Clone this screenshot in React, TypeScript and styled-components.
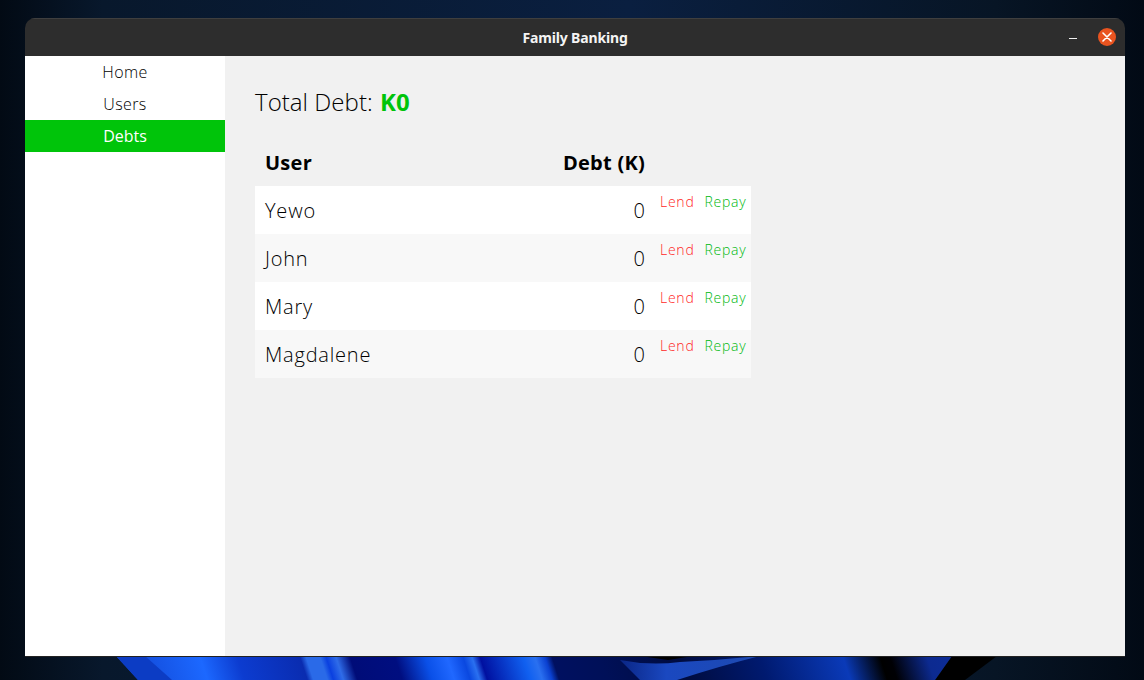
import styled, { createGlobalStyle } from "styled-components";

const GlobalStyle = createGlobalStyle`
  html, body {
    margin: 0;
    padding: 0;
    height: 100%;
    overflow: hidden;
    background: #020c1c;
  }
`;

const Desktop = styled.div`
  position: relative;
  width: 1144px;
  height: 680px;
  overflow: hidden;
  padding: 18px 19px 0 25px;
  box-sizing: border-box;
  background: linear-gradient(90deg, #020a14 0%, #08182c 9%, #0a1f40 55%, #071525 87%, #020a15 100%);
  font-family: "Open Sans", "Liberation Sans", sans-serif;
`;

const Wallpaper = styled.svg`
  position: absolute;
  left: 0;
  top: 0;
`;

const Window = styled.div`
  position: relative;
  width: 1100px;
  height: 639px;
  box-sizing: border-box;
  display: flex;
  flex-direction: column;
  border-radius: 10px 10px 0 0;
  border-bottom: 1px solid #222;
  overflow: hidden;
`;

const TitleBar = styled.div`
  position: relative;
  height: 38px;
  flex: none;
  display: flex;
  align-items: center;
  justify-content: center;
  background: #2d2d2d;
  box-shadow: inset 0 1px 0 #3f3f3f;
`;

const Title = styled.span`
  font-family: "Noto Sans", "Open Sans", sans-serif;
  font-size: 14px;
  font-weight: 700;
  letter-spacing: -0.15px;
  color: #f4f4f4;
`;

const WindowButtons = styled.div`
  position: absolute;
  right: 9px;
  top: 10px;
  display: flex;
  align-items: center;
  gap: 21px;
`;

const Minimize = styled.span`
  width: 8px;
  height: 1px;
  margin-top: 3px;
  background: #f0f0f0;
`;

const Close = styled.span`
  width: 18px;
  height: 18px;
  border-radius: 50%;
  background: #e95420;
  display: flex;
  align-items: center;
  justify-content: center;
`;

const Body = styled.div`
  flex: 1;
  display: flex;
  min-height: 0;
`;

const Sidebar = styled.nav`
  width: 200px;
  flex: none;
  background: #fff;
  display: flex;
  flex-direction: column;
`;

const NavItem = styled.div<{ $active?: boolean }>`
  height: 32px;
  line-height: 32px;
  text-align: center;
  font-size: 16px;
  font-weight: ${(p) => (p.$active ? 400 : 300)};
  letter-spacing: ${(p) => (p.$active ? "0" : "0.4px")};
  color: ${(p) => (p.$active ? "#fff" : "#000")};
  background: ${(p) => (p.$active ? "#00c40a" : "transparent")};
`;

const Main = styled.main`
  flex: 1;
  background: #f1f1f1;
  padding: 30px;
`;

const Heading = styled.h1`
  margin: 0;
  height: 32px;
  line-height: 32px;
  font-size: 24px;
  font-weight: 300;
  letter-spacing: 0.05px;
  color: #000;
`;

const Amount = styled.span`
  font-weight: 700;
  margin-left: 1px;
  color: #00c40a;
`;

const Table = styled.div`
  width: 496px;
  margin-top: 22px;
`;

const Row = styled.div<{ $striped?: boolean }>`
  display: grid;
  grid-template-columns: 290px 100px 106px;
  height: 48px;
  background: ${(p) => (p.$striped ? "#f8f8f8" : "#fff")};
`;

const HeaderRow = styled(Row)`
  height: 46px;
  background: transparent;
`;

const HeaderCell = styled.div<{ $right?: boolean }>`
  padding: 0 0 0 10px;
  font-size: 20px;
  font-weight: 700;
  line-height: 46px;
  letter-spacing: 0.25px;
  white-space: nowrap;
  color: #000;
  text-align: ${(p) => (p.$right ? "right" : "left")};
`;

const Cell = styled.div<{ $right?: boolean }>`
  padding: 0 0 0 10px;
  font-size: 20px;
  font-weight: 300;
  line-height: 50px;
  letter-spacing: ${(p) => (p.$right ? "0" : "0.8px")};
  color: #000;
  text-align: ${(p) => (p.$right ? "right" : "left")};
`;

const Actions = styled.div`
  display: flex;
  gap: 10px;
  padding: 6px 0 0 15px;
`;

const Action = styled.span<{ $color: string }>`
  font-size: 14px;
  font-weight: 300;
  line-height: 20px;
  letter-spacing: 0.75px;
  color: ${(p) => p.$color};
`;

const users = ["Yewo", "John", "Mary", "Magdalene"];

const wallpaperStops: [number, string][] = [
  [116, "#0c3cc4"],
  [145, "#1450e0"],
  [200, "#1c68ff"],
  [237, "#0c3cd0"],
  [300, "#0a2cb0"],
  [306, "#2a6ae8"],
  [320, "#2a6ae8"],
  [326, "#0a40e0"],
  [336, "#2f6ce8"],
  [350, "#000c78"],
  [395, "#000e80"],
  [425, "#0a50e8"],
  [447, "#2068ff"],
  [463, "#0a48e0"],
  [472, "#2a70f0"],
  [480, "#0010a0"],
  [523, "#1060f0"],
  [535, "#2a70f0"],
  [545, "#0a40d0"],
  [552, "#001060"],
  [600, "#001058"],
  [680, "#000c40"],
  [760, "#001a70"],
  [843, "#0a3ab8"],
  [880, "#000000"],
  [890, "#000004"],
  [927, "#0c2a90"],
  [952, "#0c2c96"],
];

export default function App() {
  return (
    <Desktop>
      <GlobalStyle />
      <Wallpaper width="1144" height="680" viewBox="0 0 1144 680">
        <defs>
          <linearGradient
            id="wave"
            gradientUnits="userSpaceOnUse"
            x1="116"
            y1="0"
            x2="952"
            y2="0"
            gradientTransform="translate(0 657) skewX(18) translate(0 -657)"
          >
            {wallpaperStops.map(([x, color]) => (
              <stop key={x} offset={(x - 116) / 836} stopColor={color} />
            ))}
          </linearGradient>
          <linearGradient id="swoosh" gradientUnits="userSpaceOnUse" x1="590" y1="0" x2="760" y2="0">
            <stop offset="0" stopColor="#001060" />
            <stop offset="0.45" stopColor="#1a48c0" />
            <stop offset="1" stopColor="#1e4ab0" />
          </linearGradient>
        </defs>
        <polygon points="997,656 965,680 935,680 952,656" fill="#000" />
        <polygon points="116,656 952,656 935,680 138,680" fill="url(#wave)" />
        <polygon points="116,656 145,656 172,680 138,680" fill="#0c3cc4" />
        <path d="M620 660 Q650 666 680 662 Q720 660 760 656 Q720 666 677 680 L640 680Z" fill="url(#swoosh)" />
        <polygon points="640,656 693,656 668,660" fill="#000" />
      </Wallpaper>
      <Window>
        <TitleBar>
          <Title>Family Banking</Title>
          <WindowButtons>
            <Minimize />
            <Close>
              <svg width="10" height="10" viewBox="0 0 10 10">
                <path d="M1 1l8 8M9 1l-8 8" stroke="#fff" strokeWidth="1.6" strokeLinecap="round" />
              </svg>
            </Close>
          </WindowButtons>
        </TitleBar>
        <Body>
          <Sidebar>
            <NavItem>Home</NavItem>
            <NavItem>Users</NavItem>
            <NavItem $active>Debts</NavItem>
          </Sidebar>
          <Main>
            <Heading>
              Total Debt: <Amount>K0</Amount>
            </Heading>
            <Table>
              <HeaderRow>
                <HeaderCell>User</HeaderCell>
                <HeaderCell $right>Debt (K)</HeaderCell>
                <div />
              </HeaderRow>
              {users.map((name, i) => (
                <Row key={name} $striped={i % 2 === 1}>
                  <Cell>{name}</Cell>
                  <Cell $right>0</Cell>
                  <Actions>
                    <Action $color="#ff1f1f">Lend</Action>
                    <Action $color="#00b810">Repay</Action>
                  </Actions>
                </Row>
              ))}
            </Table>
          </Main>
        </Body>
      </Window>
    </Desktop>
  );
}
